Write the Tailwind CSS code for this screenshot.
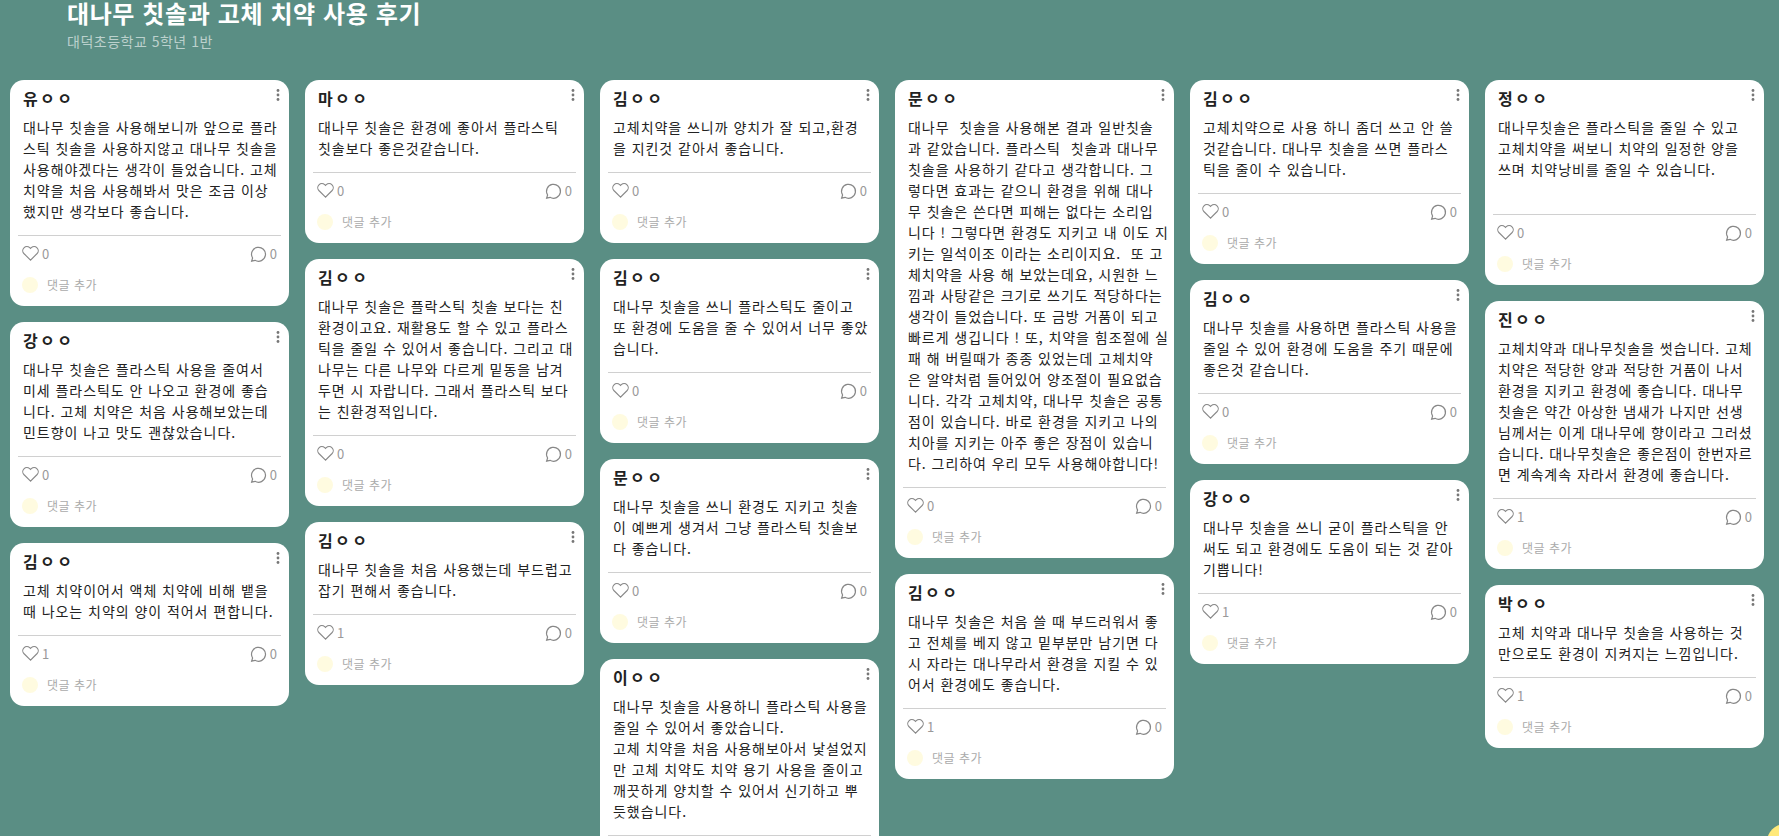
<!doctype html>
<html lang="ko"><head><meta charset="utf-8"><script src="https://cdn.jsdelivr.net/npm/@tailwindcss/browser@4"></script></head>
<body class="m-0 h-[836px] overflow-hidden bg-[#5a8e84] font-['Noto_Sans_CJK_KR','Noto_Sans',sans-serif] relative">
<header class="h-[80px] pl-[67px] text-white">
<h1 class="text-[24px] leading-[26px] font-bold tracking-[0.6px]">대나무 칫솔과 고체 치약 사용 후기</h1>
<p class="mt-[5px] text-[14px] leading-[20px] text-white/60 tracking-[0.5px]">대덕초등학교 5학년 1반</p>
</header>
<main class="flex gap-4 pl-[10px] items-start" id="board"></main>
<div class="absolute right-[-24px] bottom-[-24px] w-[36px] h-[36px] rounded-full bg-[#ffe97a]"></div>
<script>
const data=[
[["유ㅇㅇ","대나무 칫솔을 사용해보니까 앞으로 플라스틱 칫솔을 사용하지않고 대나무 칫솔을 사용해야겠다는 생각이 들었습니다. 고체 치약을 처음 사용해봐서 맛은 조금 이상 했지만 생각보다 좋습니다.",0],
["강ㅇㅇ","대나무 칫솔은 플라스틱 사용을 줄여서 미세 플라스틱도 안 나오고 환경에 좋습니다. 고체 치약은 처음 사용해보았는데 민트향이 나고 맛도 괜찮았습니다.",0],
["김ㅇㅇ","고체 치약이어서 액체 치약에 비해 뱉을 때 나오는 치약의 양이 적어서 편합니다.",1]],
[["마ㅇㅇ","대나무 칫솔은 환경에 좋아서 플라스틱 칫솔보다 좋은것같습니다.",0],
["김ㅇㅇ","대나무 칫솔은 플락스틱 칫솔 보다는 친환경이고요. 재활용도 할 수 있고 플라스틱을 줄일 수 있어서 좋습니다. 그리고 대나무는 다른 나무와 다르게 밑동을 남겨두면 시 자랍니다. 그래서 플라스틱 보다는 친환경적입니다.",0],
["김ㅇㅇ","대나무 칫솔을 처음 사용했는데 부드럽고 잡기 편해서 좋습니다.",1]],
[["김ㅇㅇ","고체치약을 쓰니까 양치가 잘 되고,환경을 지킨것 같아서 좋습니다.",0],
["김ㅇㅇ","대나무 칫솔을 쓰니 플라스틱도 줄이고 또 환경에 도움을 줄 수 있어서 너무 좋았습니다.",0],
["문ㅇㅇ","대나무 칫솔을 쓰니 환경도 지키고 칫솔이 예쁘게 생겨서 그냥 플라스틱 칫솔보다 좋습니다.",0],
["이ㅇㅇ","대나무 칫솔을 사용하니 플라스틱 사용을 줄일 수 있어서 좋았습니다.\n고체 치약을 처음 사용해보아서 낯설었지만 고체 치약도 치약 용기 사용을 줄이고 깨끗하게 양치할 수 있어서 신기하고 뿌듯했습니다.",0]],
[["문ㅇㅇ","대나무  칫솔을 사용해본 결과 일반칫솔\n과 같았습니다. 플라스틱  칫솔과 대나무\n칫솔을 사용하기 같다고 생각합니다. 그\n렇다면 효과는 같으니 환경을 위해 대나\n무 칫솔은 쓴다면 피해는 없다는 소리입\n니다 ! 그렇다면 환경도 지키고 내 이도 지\n키는 일석이조 이라는 소리이지요.  또 고\n체치약을 사용 해 보았는데요, 시원한 느\n낌과 사탕같은 크기로 쓰기도 적당하다는\n생각이 들었습니다. 또 금방 거품이 되고\n빠르게 생깁니다 ! 또, 치약을 힘조절에 실\n패 해 버릴때가 종종 있었는데 고체치약\n은 알약처럼 들어있어 양조절이 필요없습\n니다. 각각 고체치약, 대나무 칫솔은 공통\n점이 있습니다. 바로 환경을 지키고 나의\n치아를 지키는 아주 좋은 장점이 있습니\n다. 그리하여 우리 모두 사용해야합니다!",0,"pr-0"],
["김ㅇㅇ","대나무 칫솔은 처음 쓸 때 부드러워서 좋고 전체를 베지 않고 밑부분만 남기면 다시 자라는 대나무라서 환경을 지킬 수 있어서 환경에도 좋습니다.",1]],
[["김ㅇㅇ","고체치약으로 사용 하니 좀더 쓰고 안 쓸 것같습니다. 대나무 칫솔을 쓰면 플라스틱을 줄이 수 있습니다.",0],
["김ㅇㅇ","대나무 칫솔를 사용하면 플라스틱 사용을 줄일 수 있어 환경에 도움을 주기 때문에 좋은것 같습니다.",0],
["강ㅇㅇ","대나무 칫솔을 쓰니 굳이 플라스틱을 안 써도 되고 환경에도 도움이 되는 것 같아 기쁩니다!",1]],
[["정ㅇㅇ","대나무칫솔은 플라스틱을 줄일 수 있고 고체치약을 써보니 치약의 일정한 양을 쓰며 치약낭비를 줄일 수 있습니다.\n\u200b",0],
["진ㅇㅇ","고체치약과 대나무칫솔을 썻습니다. 고체 치약은 적당한 양과 적당한 거품이 나서 환경을 지키고 환경에 좋습니다. 대나무 칫솔은 약간 아상한 냄새가 나지만 선생님께서는 이게 대나무에 향이라고 그러셨습니다. 대나무칫솔은 좋은점이 한번자르면 계속계속 자라서 환경에 좋습니다.",1],
["박ㅇㅇ","고체 치약과 대나무 칫솔을 사용하는 것 만으로도 환경이 지켜지는 느낌입니다.",1]]];
const card=([n,t,l,w="pr-[9px]"])=>`<article class="relative w-[279px] rounded-[14px] bg-white">
<svg class="absolute right-[9px] top-[9px] w-[4px] h-[12px] fill-[#777]" viewBox="0 0 4 12"><circle cx="2" cy="1.5" r="1.4"/><circle cx="2" cy="6" r="1.4"/><circle cx="2" cy="10.5" r="1.4"/></svg>
<h2 class="pt-[6px] pl-[13px] text-[16px] leading-[24px] font-bold tracking-[2.4px] text-[#222]">${n}</h2>
<p class="mt-[7px] pl-[13px] ${w} text-[14px] leading-[21px] tracking-[0.95px] text-[#222] whitespace-pre-wrap break-all">${t}</p>
<div class="mt-[13px] mx-[8px] border-t border-[#d0d0d0]"></div>
<div class="flex items-center justify-between pl-[11px] pr-[12px] h-[35px] text-[13px] text-[#999]">
<span class="flex items-center gap-[2px]"><svg class="w-[19px] h-[19px] fill-none stroke-[#888]" viewBox="0 0 24 24" stroke-width="1.4"><path d="M12 20.5 3.6 12a5.2 5.2 0 0 1 7.4-7.3l1 1 1-1a5.2 5.2 0 0 1 7.4 7.3z"/></svg>${l}</span>
<span class="flex items-center gap-[3px]"><svg class="w-[18px] h-[18px] fill-none stroke-[#888]" viewBox="0 0 24 24" stroke-width="1.6"><path d="M3.5 21.5l1.3-4.2A9.3 9.3 0 1 1 8 20.4z"/></svg>0</span>
</div>
<div class="flex items-center gap-[9px] pl-[12px] h-[28px] text-[12px] tracking-[0.5px] text-[#aaa]"><span class="w-[16px] h-[16px] rounded-full bg-[#fffbe0]"></span>댓글 추가</div>
<div class="h-[7px]"></div></article>`;
document.getElementById('board').innerHTML=data.map(c=>`<section class="flex flex-col gap-4">${c.map(card).join('')}</section>`).join('');
</script>
</body></html>
